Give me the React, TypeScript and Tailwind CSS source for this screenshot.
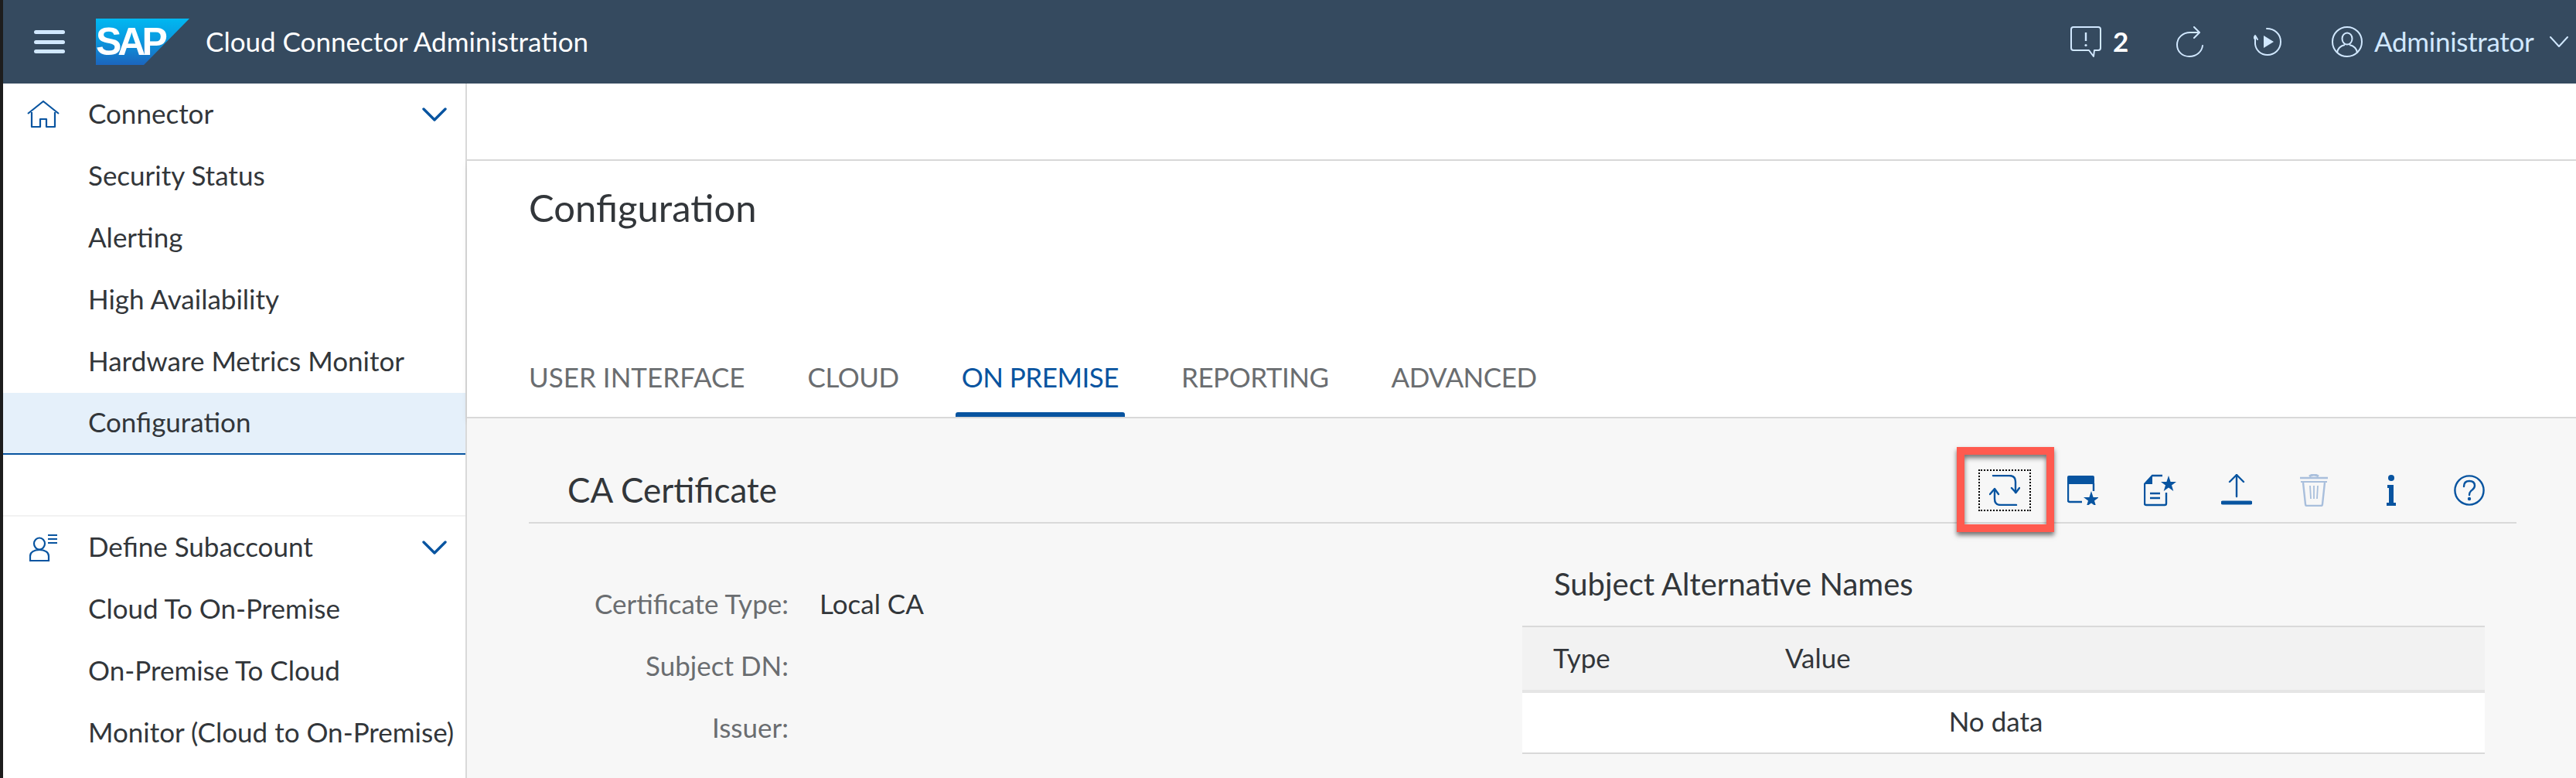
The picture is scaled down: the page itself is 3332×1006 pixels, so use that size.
import React from "react";

const FONT = "font-['Lato','Liberation_Sans',sans-serif]";

const BLUE = "#0854a0";

const connectorItems = [
  "Security Status",
  "Alerting",
  "High Availability",
  "Hardware Metrics Monitor",
  "Configuration",
];
const subaccountItems = [
  "Cloud To On-Premise",
  "On-Premise To Cloud",
  "Monitor (Cloud to On-Premise)",
];
const tabs = ["USER INTERFACE", "CLOUD", "ON PREMISE", "REPORTING", "ADVANCED"];

const SapLogo = () => (
  <div className="relative h-[60px] w-[121px] shrink-0">
    <svg width="121" height="60" viewBox="0 0 121 60" className="absolute inset-0">
      <defs>
        <linearGradient id="sapGrad" x1="0" y1="0" x2="0" y2="1">
          <stop offset="0" stopColor="#00b8f1" />
          <stop offset="0.45" stopColor="#0a9ae0" />
          <stop offset="1" stopColor="#1c65bd" />
        </linearGradient>
      </defs>
      <polygon points="0,0 121,0 62,60 0,60" fill="url(#sapGrad)" />
    </svg>
    <span className="absolute left-0 top-[6px] font-['Liberation_Sans',sans-serif] text-[50px] leading-[48px] font-bold tracking-[-5px] text-white">
      SAP
    </span>
  </div>
);

const NavChevron = () => (
  <svg width="32" height="18" viewBox="0 0 32 18" fill="none" stroke={BLUE} strokeWidth="3.4" strokeLinecap="round" strokeLinejoin="round">
    <path d="M2 2 L16 16 L30 2" />
  </svg>
);

const HomeIcon = () => (
  <svg width="42" height="36" viewBox="0 0 42 36" fill="none" stroke={BLUE} strokeWidth="2.2" strokeLinejoin="round">
    <path d="M1 17 L21 1 L41 17" />
    <path d="M6 15 V34 H17 V24 H25 V34 H36 V15" />
  </svg>
);

const SubaccountIcon = () => (
  <svg width="36" height="36" viewBox="0 0 36 36" fill="none" stroke={BLUE} strokeWidth="2.2">
    <ellipse cx="13" cy="13" rx="7" ry="7.5" />
    <path d="M1 35 V29 C1 24 6 21 13 21 C20 21 25 24 25 29 V35 Z" />
    <path d="M24 2 H36 M24 7 H36 M24 12 H36" />
  </svg>
);

const HeaderIcons = () => (
  <div className="flex items-center text-[#d1e8ff]">
    <svg width="40" height="40" viewBox="0 0 40 40" fill="none" stroke="#d1e8ff" strokeWidth="2" strokeLinejoin="round">
      <path d="M4 1 H36 Q39 1 39 4 V28 Q39 31 36 31 H31 L30 39 L24 31 H4 Q1 31 1 28 V4 Q1 1 4 1 Z" />
      <path d="M20 8 V19" strokeWidth="2.4" />
      <circle cx="20" cy="24.5" r="1.6" fill="#d1e8ff" stroke="none" />
    </svg>
    <span className="ml-[15px] w-[82px] pb-[2px] text-[35px] leading-none font-bold text-white">2</span>
    <svg width="36" height="40" viewBox="0 0 36 40" fill="none" stroke="#d1e8ff" strokeWidth="2" strokeLinecap="round" strokeLinejoin="round">
      <path d="M28 8 H18 C8 8 1 15 1 24 C1 33 8 39 17 39 C26 39 33 33 34 25" />
      <path d="M23 1 L30 8 L23 15" />
    </svg>
    <div className="w-[64px]" />
    <svg width="36" height="36" viewBox="0 0 36 36" fill="none" stroke="#d1e8ff" strokeWidth="2" strokeLinecap="round" strokeLinejoin="round">
      <path d="M17 1 C27 1 35 8 35 18 C35 28 27 35 18 35 C9 35 3 29 2 21 L2 12" />
      <path d="M-1 15 L2 10 L5 15" />
      <polygon points="13,10 26,18 13,26" fill="#d1e8ff" stroke="none" />
    </svg>
    <div className="w-[65px]" />
    <svg width="40" height="40" viewBox="0 0 40 40" fill="none" stroke="#d1e8ff" strokeWidth="2">
      <circle cx="20" cy="20" r="19" />
      <ellipse cx="20" cy="16" rx="6.5" ry="7.5" />
      <path d="M7 34 C8 27 13 25 17 24 M33 34 C32 27 27 25 23 24" />
    </svg>
    <span className="ml-[15px] w-[227px] pb-[2px] text-[35px] leading-none tracking-[-0.3px]">Administrator</span>
    <svg width="24" height="14" viewBox="0 0 24 14" fill="none" stroke="#d1e8ff" strokeWidth="2" strokeLinecap="round" strokeLinejoin="round">
      <path d="M1 1 L12 13 L23 1" />
    </svg>
  </div>
);

const RefreshIcon = () => (
  <svg width="40" height="40" viewBox="0 0 40 40" fill="none" stroke={BLUE} strokeWidth="2.4" strokeLinecap="round" strokeLinejoin="round">
    <path d="M5 1 H26 Q34 1 34 9 V23" />
    <path d="M29 17 L34.5 23 L39 17" />
    <path d="M35 39 H15 Q7 39 7 31 V19" />
    <path d="M1 25 L7 18 L12 25" />
  </svg>
);

const CalendarStarIcon = () => (
  <svg width="40" height="38" viewBox="0 0 40 38" fill="none">
    <path d="M2 0 H33 Q35 0 35 2 V11 H0 V2 Q0 0 2 0 Z" fill={BLUE} />
    <path d="M1 10 V32 Q1 34 3 34 H19 M34 10 V20" stroke={BLUE} strokeWidth="2.4" />
    <polygon points="31,20 33.6,28 41,28 35,32.5 37.3,40 31,35.5 24.7,40 27,32.5 21,28 28.4,28" fill={BLUE} />
  </svg>
);

const DocStarIcon = () => (
  <svg width="42" height="42" viewBox="0 0 42 42" fill="none">
    <path d="M24 2 H11 L1 13 V38 Q1 40 3 40 H27 Q29 40 29 38 V24" stroke={BLUE} strokeWidth="2.4" />
    <polygon points="11,2 11,13 1,13" fill={BLUE} />
    <path d="M8 25 H21 M8 31 H21" stroke={BLUE} strokeWidth="2.6" />
    <polygon points="32,2 34.6,10 42,10 36,14.5 38.3,22 32,17.5 25.7,22 28,14.5 22,10 29.4,10" fill={BLUE} />
  </svg>
);

const UploadIcon = () => (
  <svg width="40" height="42" viewBox="0 0 40 42" fill="none" stroke={BLUE} strokeWidth="2.4" strokeLinecap="round" strokeLinejoin="round">
    <path d="M20 1 V29" />
    <path d="M11 10 L20 1 L29 10" />
    <path d="M2 37 H38" strokeWidth="5" />
  </svg>
);

const TrashIcon = () => (
  <svg width="36" height="42" viewBox="0 0 36 42" fill="none" stroke="#a9bfdc" strokeWidth="2.4" strokeLinejoin="round">
    <path d="M12 3 Q18 -1 24 3" strokeWidth="3" />
    <path d="M0 5 H36" strokeWidth="2.6" />
    <path d="M1 10 H35" strokeWidth="2" />
    <path d="M4 11 L7 39 Q7 41 9 41 H27 Q29 41 29 39 L32 11" />
    <path d="M13 15 L14 32 M18 15 V32 M23 15 L22 32" strokeWidth="1.8" />
  </svg>
);

const InfoIcon = () => (
  <svg width="12" height="40" viewBox="0 0 12 40" fill={BLUE}>
    <ellipse cx="6" cy="4" rx="4" ry="4" />
    <path d="M1 13 H9 V36 H12 V40 H0 V36 H3 V17 H1 Z" />
  </svg>
);

const HelpIcon = () => (
  <svg width="40" height="40" viewBox="0 0 40 40" fill="none" stroke={BLUE} strokeWidth="2.4" strokeLinecap="round">
    <circle cx="20" cy="20" r="18.6" />
    <path d="M13 15 C13 10 16 8 20 8 C24 8 27 10 27 14 C27 18 24 19 22 21 C20.5 22.5 20 23.5 20 26" />
    <circle cx="20" cy="31" r="2.2" fill={BLUE} stroke="none" />
  </svg>
);

const Header = () => (
  <header className="flex h-[108px] shrink-0 items-center bg-[#354a5f] pr-[10px]">
    <div className="ml-[40px] flex h-[30px] w-[40px] flex-col justify-between">
      <div className="h-[5px] rounded-full bg-[#d1e8ff]" />
      <div className="h-[5px] rounded-full bg-[#d1e8ff]" />
      <div className="h-[5px] rounded-full bg-[#d1e8ff]" />
    </div>
    <div className="ml-[40px]">
      <SapLogo />
    </div>
    <span className="ml-[21px] pb-[2px] text-[35px] leading-none text-white">Cloud Connector Administration</span>
    <div className="ml-auto">
      <HeaderIcons />
    </div>
  </header>
);

const NavGroupTitle = ({ icon, label }: { icon: React.ReactNode; label: string }) => (
  <div className="flex h-[80px] items-center">
    <div className="flex w-[110px] justify-center pr-[6px]">{icon}</div>
    <span className="flex-1 pb-[3px] text-[35px] leading-none text-[#32363a]">{label}</span>
    <div className="pr-[24px]">
      <NavChevron />
    </div>
  </div>
);

const NavItem = ({ label, selected }: { label: string; selected?: boolean }) => (
  <div
    className={
      selected
        ? "flex h-[80px] items-center border-b-2 border-[#0854a0] bg-[#e5f0fa] pb-[3px] pl-[110px]"
        : "flex h-[80px] items-center pb-[3px] pl-[110px]"
    }
  >
    <span className="whitespace-nowrap text-[35px] leading-none text-[#32363a]">{label}</span>
  </div>
);

const Sidebar = () => (
  <nav className="w-[600px] shrink-0 border-r-2 border-[#d9d9d9] bg-white pr-0">
    <div className="h-[560px] border-b-2 border-[#f2f2f2] pt-0">
      <NavGroupTitle icon={<HomeIcon />} label="Connector" />
      {connectorItems.map((item) => (
        <NavItem key={item} label={item} selected={item === "Configuration"} />
      ))}
    </div>
    <NavGroupTitle icon={<SubaccountIcon />} label="Define Subaccount" />
    {subaccountItems.map((item) => (
      <NavItem key={item} label={item} />
    ))}
  </nav>
);

const Tabs = () => (
  <div className="flex h-[100px] items-start gap-[81px] pl-[80px]">
    {tabs.map((tab) =>
      tab === "ON PREMISE" ? (
        <div key={tab} className="relative flex h-[100px] items-center pb-[3px]">
          <span className="text-[35px] leading-none tracking-[-0.5px] text-[#0854a0]">{tab}</span>
          <div className="absolute -inset-x-[8px] bottom-0 h-[6px] rounded-t-[3px] bg-[#0854a0]" />
        </div>
      ) : (
        <div key={tab} className="flex h-[100px] items-center pb-[3px]">
          <span
            className={
              tab === "USER INTERFACE"
                ? "text-[35px] leading-none text-[#6a6d70]"
                : "text-[35px] leading-none tracking-[-0.5px] text-[#6a6d70]"
            }
          >
            {tab}
          </span>
        </div>
      ),
    )}
  </div>
);

const Toolbar = () => (
  <div className="flex items-center">
    <div className="relative flex h-[54px] w-[68px] items-center justify-center border-2 border-dotted border-black">
      <RefreshIcon />
      <div className="absolute -top-[31px] -right-[32px] -bottom-[29px] -left-[30px] border-[10px] border-[#ff5a4f] shadow-[0_4px_6px_rgba(0,0,0,0.55),inset_0_4px_6px_rgba(0,0,0,0.55)]" />
    </div>
    <div className="ml-[47px]"><CalendarStarIcon /></div>
    <div className="ml-[59px]"><DocStarIcon /></div>
    <div className="ml-[58px]"><UploadIcon /></div>
    <div className="ml-[62px]"><TrashIcon /></div>
    <div className="ml-[76px]"><InfoIcon /></div>
    <div className="ml-[75px] mr-[41px]"><HelpIcon /></div>
  </div>
);

const FormRow = ({ label, value }: { label: string; value?: string }) => (
  <div className="flex h-[80px] items-center">
    <span className="w-[336px] text-right text-[35px] leading-none text-[#6a6d70]">{label}</span>
    {value && <span className="ml-[40px] text-[35px] leading-none text-[#32363a]">{value}</span>}
  </div>
);

const AltNames = () => (
  <div className="ml-auto mr-[41px] w-[1245px]">
    <div className="flex h-[92px] items-center pb-[16px] pl-[41px] text-[40px] leading-none text-[#32363a]">
      Subject Alternative Names
    </div>
    <div className="flex h-[87px] items-center border-t-2 border-b-4 border-t-[#d9d9d9] border-b-[#e5e5e5] bg-[#f2f2f2] pb-[3px] text-[35px] leading-none text-[#32363a]">
      <span className="w-[340px] pl-[40px]">Type</span>
      <span>Value</span>
    </div>
    <div className="flex h-[79px] items-center justify-center border-b-2 border-[#d9d9d9] bg-white pr-[20px] pb-[4px] text-[35px] leading-none text-[#32363a]">
      No data
    </div>
  </div>
);

const Panel = () => (
  <section className="flex-1 bg-[#f7f7f7] pr-[77px] pl-[80px]">
    <div className="flex h-[136px] items-center justify-between border-b-2 border-[#d9d9d9] pt-[52px] pl-[50px]">
      <h2 className="pb-[2px] text-[44px] leading-none font-normal text-[#32363a]">CA Certificate</h2>
      <Toolbar />
    </div>
    <div className="flex">
      <div className="w-[600px] shrink-0 pt-[63px]">
        <FormRow label="Certificate Type:" value="Local CA" />
        <FormRow label="Subject DN:" />
        <FormRow label="Issuer:" />
      </div>
      <div className="flex-1 pt-[40px]">
        <AltNames />
      </div>
    </div>
  </section>
);

const App = () => (
  <div className={`flex h-[1006px] w-[3332px] overflow-hidden bg-[#1d1d1d] pl-[4px] ${FONT}`}>
    <div className="flex min-w-0 flex-1 flex-col">
      <Header />
      <div className="flex min-h-0 flex-1">
        <Sidebar />
        <main className="flex min-w-0 flex-1 flex-col bg-white">
          <div className="h-[100px] shrink-0 border-b-2 border-[#d9d9d9]" />
          <div className="flex h-[333px] shrink-0 flex-col justify-between border-b-2 border-[#d9d9d9] shadow-[0_4px_8px_rgba(0,0,0,0.08)]">
            <h1 className="pl-[80px] pt-[36px] text-[49px] leading-none font-normal text-[#32363a]">Configuration</h1>
            <Tabs />
          </div>
          <Panel />
        </main>
      </div>
    </div>
  </div>
);

export default App;
